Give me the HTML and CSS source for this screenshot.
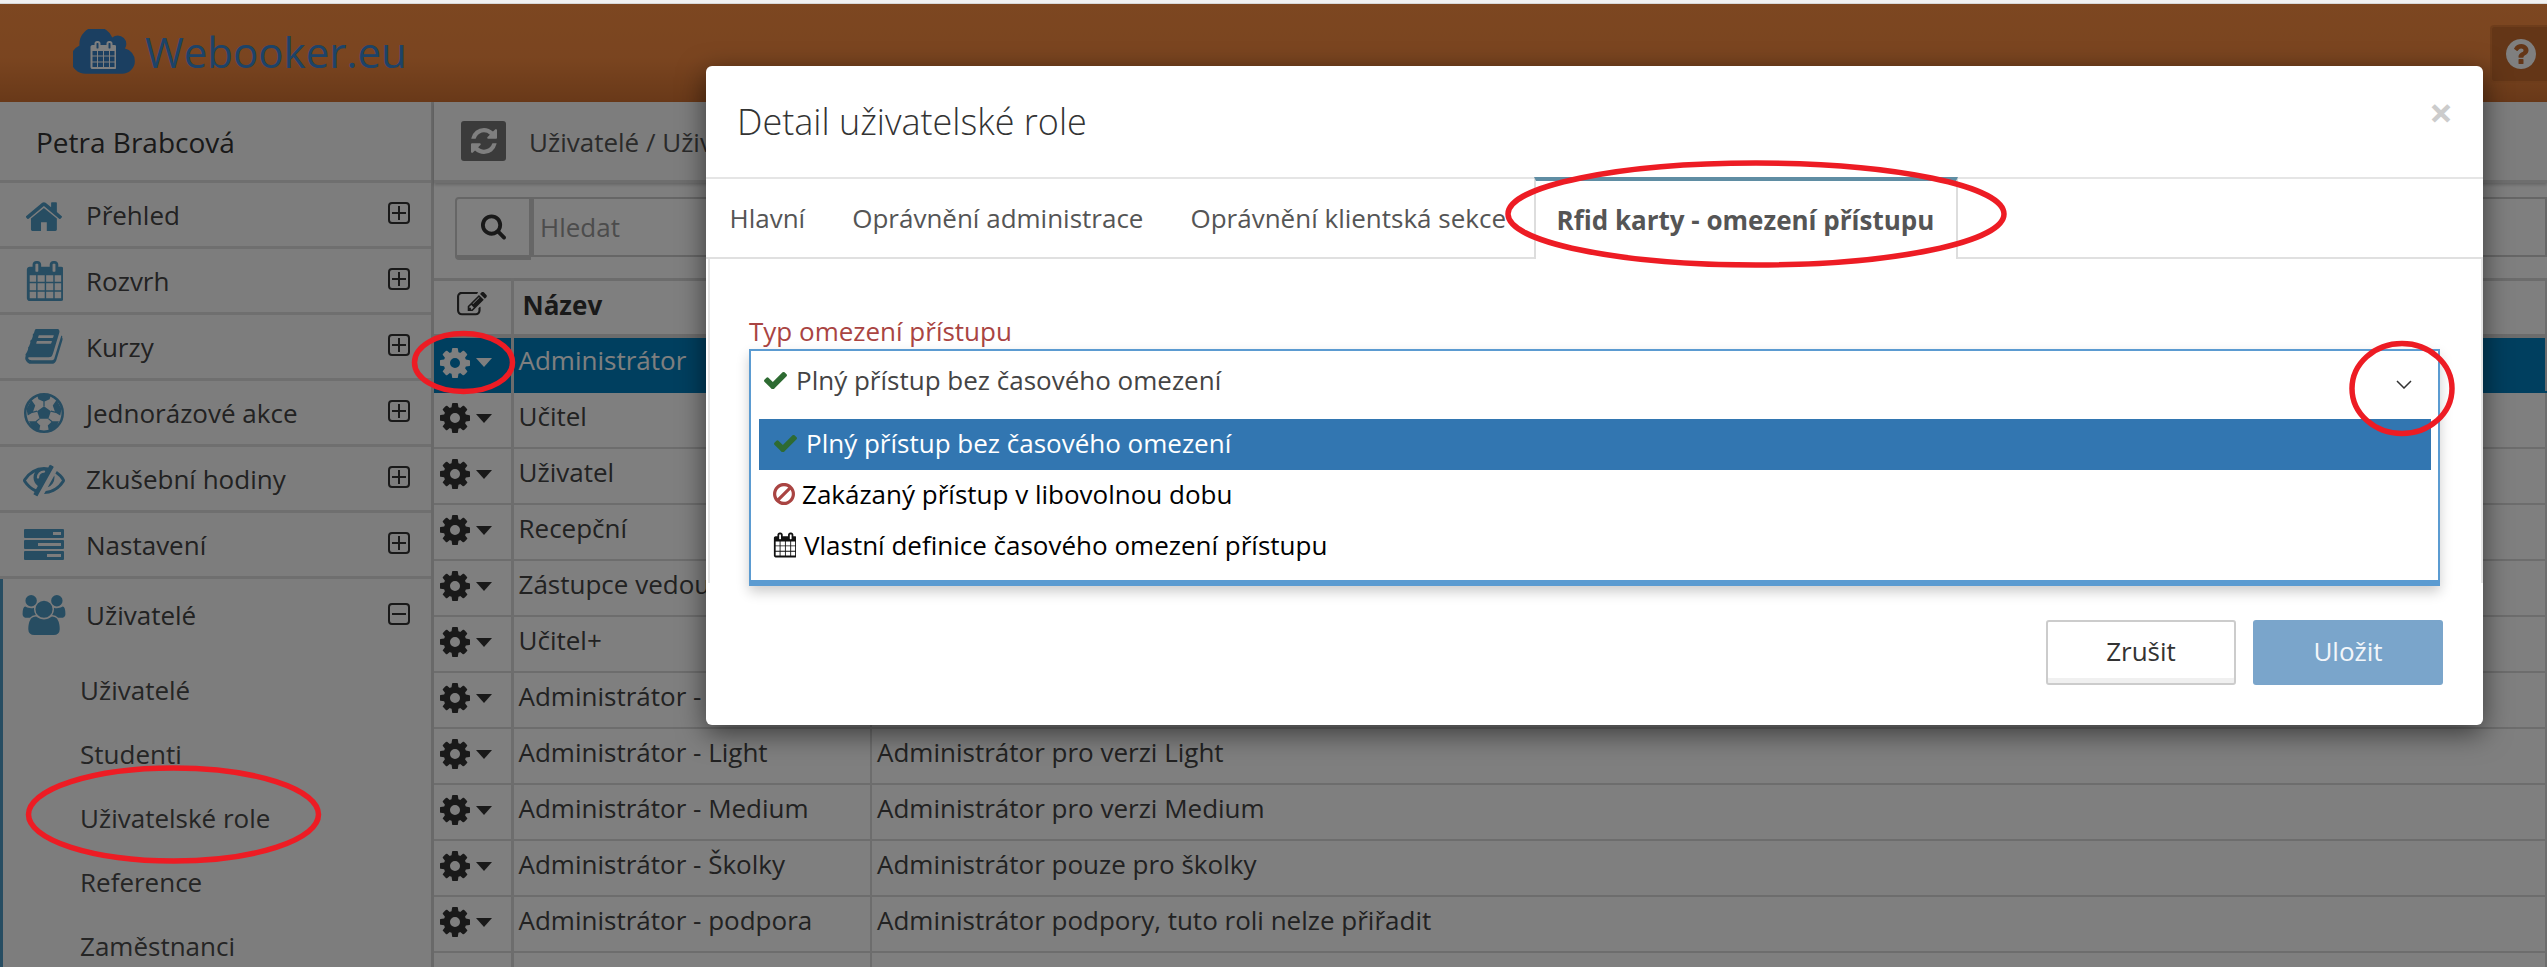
FILE: index.html
```html
<!DOCTYPE html>
<html lang="cs">
<head>
<meta charset="utf-8">
<title>Webooker.eu</title>
<link rel="stylesheet" href="styles.css">
</head>
<body>
<svg class="sprite" xmlns="http://www.w3.org/2000/svg">
  <symbol id="i-home" viewBox="100 150 1600 1350"><path d="M1472 992v480q0 26-19 45t-45 19h-384v-384h-256v384h-384q-26 0-45-19t-19-45v-480q0-1 .5-3t.5-3l575-474 575 474q1 2 1 6zm223-69l-62 74q-8 9-21 11h-3q-13 0-21-7l-692-577-692 577q-12 8-24 7-13-2-21-11l-62-74q-8-10-7-23.5t11-21.5l719-599q32-26 76-26t76 26l244 204v-195q0-14 9-23t23-9h192q14 0 23 9t9 23v408l219 182q10 8 11 21.5t-7 23.5z"/></symbol>
  <symbol id="i-cal" viewBox="0 0 1664 1792"><path d="M192 1664h288v-288h-288v288zm352 0h320v-288h-320v288zm-352-352h288v-320h-288v320zm352 0h320v-320h-320v320zm-352-384h288v-288h-288v288zm736 736h320v-288h-320v288zm-384-736h320v-288h-320v288zm768 736h288v-288h-288v288zm-384-352h320v-320h-320v320zm-352-864v-288q0-13-9.5-22.5t-22.5-9.5h-64q-13 0-22.5 9.5t-9.5 22.5v288q0 13 9.5 22.5t22.5 9.5h64q13 0 22.5-9.5t9.5-22.5zm736 864h288v-320h-288v320zm-384-384h320v-288h-320v288zm384 0h288v-288h-288v288zm32-480v-288q0-13-9.5-22.5t-22.5-9.5h-64q-13 0-22.5 9.5t-9.5 22.5v288q0 13 9.5 22.5t22.5 9.5h64q13 0 22.5-9.5t9.5-22.5zm384-64v1280q0 52-38 90t-90 38h-1408q-52 0-90-38t-38-90v-1280q0-52 38-90t90-38h128v-96q0-66 47-113t113-47h64q66 0 113 47t47 113v96h384v-96q0-66 47-113t113-47h64q66 0 113 47t47 113v96h128q52 0 90 38t38 90z"/></symbol>
  <symbol id="i-book" viewBox="60 110 1680 1560"><path d="M1703 478q40 57 18 129l-275 906q-19 64-76.500 107.500t-122.500 43.500h-923q-77 0-148.500-53.500t-99.500-131.500q-24-67-2-127 0-4 3-27t4-37q1-8-3-21.500t-3-19.500q2-11 8-21t16.500-23.500 16.500-23.500q23-38 45-91.500t30-91.500q3-10 .5-30t-.5-28q3-11 17-28t17-23q21-36 42-92t25-90q1-9-2.500-32t.5-28q4-13 22-30.500t22-22.500q19-26 42.500-84.500t27.500-96.500q1-8-3-25.500t-2-26.500q2-8 9-18t18-23 17-21q8-12 16.500-35.500t15-45 16.500-46.500 20-41.500 27.500-24.500 37.500-12 50 6l-1 3q47-11 63-11h761q74 0 114 56t18 130l-274 906q-36 119-71.500 153.500t-128.500 34.500h-869q-27 0-38 15-11 16-1 43 24 70 144 70h923q29 0 56-15.500t35-41.500l300-987q7-22 5-57 38 15 59 43zm-1064 2q-4 13 2 22.500t20 9.500h608q13 0 25.500-9.500t16.500-22.500l21-64q4-13-2-22.500t-20-9.500h-608q-13 0-25.500 9.500t-16.500 22.500zm-83 256q-4 13 2 22.500t20 9.500h608q13 0 25.500-9.500t16.500-22.500l21-64q4-13-2-22.500t-20-9.500h-608q-13 0-25.500 9.500t-16.500 22.500z"/></symbol>
  <symbol id="i-ball" viewBox="0 0 64 64"><circle cx="32" cy="32" r="30" fill="none" stroke="currentColor" stroke-width="4"/><path d="M32 21l11 8-4 12H25l-4-12zM21 3h22l-2 7-9 4-9-4zM4 25l8-14 6 9-4 11-8 5zM60 25l-8-14-6 9 4 11 8 5zM8 45h11l7 7-2 9-11-6zM56 45H45l-7 7 2 9 11-6z"/><path d="M32 21v-8M21 29l-8 2M43 29l8 2M25 41l-6 5M39 41l6 5" fill="none" stroke="currentColor" stroke-width="2"/></symbol>
  <symbol id="i-eye" viewBox="0 0 1792 1792"><path d="M555 1335l78-141q-87-63-136-159t-49-203q0-121 61-225-229 117-381 353 167 258 427 375zm389-759q0-20-14-34t-34-14q-125 0-214.500 89.500t-89.500 214.500q0 20 14 34t34 14 34-14 14-34q0-86 61-147t147-61q20 0 34-14t14-34zm363-191q0 7-1 9-106 189-316 567t-315 566l-49 89q-10 16-28 16-12 0-134-70-16-10-16-28 0-12 44-87-143-65-263.500-173t-208.500-245q-20-31-20-69t20-69q153-235 380-371t496-136q89 0 180 17l54-97q10-16 28-16 5 0 18 6t31 15.500 33 18.500 31.500 18.500 19.500 11.500q16 10 16 27zm37 447q0 139-79 253.500t-209 164.500l280-502q8 45 8 84zm448 128q0 35-20 69-39 64-109 145-150 172-347.500 267t-419.500 95l74-132q212-18 392.500-137t301.500-307q-115-179-282-294l63-112q95 64 182.500 153t144.500 184q20 34 20 69z"/></symbol>
  <symbol id="i-server" viewBox="0 0 40 31"><path fill-rule="evenodd" d="M1 0h38a1 1 0 0 1 1 1v7a1 1 0 0 1-1 1H1a1 1 0 0 1-1-1V1a1 1 0 0 1 1-1zM29 3v3h8V3zM1 11h38a1 1 0 0 1 1 1v7a1 1 0 0 1-1 1H1a1 1 0 0 1-1-1v-7a1 1 0 0 1 1-1zM14 14v3h23v-3zM1 22h38a1 1 0 0 1 1 1v7a1 1 0 0 1-1 1H1a1 1 0 0 1-1-1v-7a1 1 0 0 1 1-1zM23 25v3h14v-3z"/></symbol>
  <symbol id="i-users" viewBox="0 0 1920 1792"><path d="M593 896q-162 5-265 128h-134q-82 0-138-40.500t-56-118.500q0-353 124-353 6 0 43.500 21t97.500 42.500 119 21.500q67 0 133-23-5 37-5 66 0 139 81 256zm1071 637q0 120-73 189.500t-194 69.500h-874q-121 0-194-69.500t-73-189.500q0-53 3.500-103.500t14-109 26.500-108.500 43-97.500 62-81 85.500-53.500 111.500-20q10 0 43 21.500t73 48 107 48 135 21.500 135-21.500 107-48 73-48 43-21.500q61 0 111.500 20t85.500 53.500 62 81 43 97.500 26.500 108.500 14 109 3.500 103.500zm-1024-1277q0 106-75 181t-181 75-181-75-75-181 75-181 181-75 181 75 75 181zm704 384q0 159-112.500 271.500t-271.500 112.500-271.500-112.500-112.500-271.500 112.500-271.500 271.500-112.500 271.500 112.500 112.500 271.500zm576 225q0 78-56 118.500t-138 40.500h-134q-103-123-265-128 81-117 81-256 0-29-5-66 66 23 133 23 59 0 119-21.500t97.500-42.500 43.500-21q124 0 124 353zm-128-609q0 106-75 181t-181 75-181-75-75-181 75-181 181-75 181 75 75 181z"/></symbol>
  <symbol id="i-cog" viewBox="128 128 1536 1536"><path d="M1152 896q0-106-75-181t-181-75-181 75-75 181 75 181 181 75 181-75 75-181zm512-109v222q0 12-8 23t-20 13l-185 28q-19 54-39 91 35 50 107 138 10 12 10 25t-9 23q-27 37-99 108t-94 71q-12 0-26-9l-138-108q-44 23-91 38-16 136-29 186-7 28-36 28h-222q-14 0-24.500-8.500t-11.500-21.500l-28-184q-49-16-90-37l-141 107q-10 9-25 9-14 0-25-11-126-114-165-168-7-10-7-23 0-12 8-23 15-21 51-66.500t54-70.500q-27-50-41-99l-183-27q-13-2-21-12.500t-8-23.500v-222q0-12 8-23t19-13l186-28q14-46 39-92-40-57-107-138-10-12-10-24 0-10 9-23 26-36 98.500-107.500t94.500-71.500q13 0 26 10l138 107q44-23 91-38 16-136 29-186 7-28 36-28h222q14 0 24.500 8.500t11.500 21.500l28 184q49 16 90 37l142-107q9-9 24-9 13 0 25 10 129 119 165 170 7 8 7 22 0 12-8 23-15 21-51 66.500t-54 70.500q26 50 41 98l183 28q13 2 21 12.500t8 23.500z"/></symbol>
  <symbol id="i-refresh" viewBox="128 128 1536 1536"><path d="M1639 1056q0 5-1 7-64 268-268 434.500t-478 166.500q-146 0-282.500-55t-243.500-157l-129 129q-19 19-45 19t-45-19-19-45v-448q0-26 19-45t45-19h448q26 0 45 19t19 45-19 45l-137 137q71 66 161 102t187 36q134 0 250-65t186-179q11-17 53-117 8-23 30-23h192q13 0 22.500 9.500t9.500 22.500zm25-800v448q0 26-19 45t-45 19h-448q-26 0-45-19t-19-45 19-45l138-138q-148-137-349-137-134 0-250 65t-186 179q-11 17-53 117-8 23-30 23h-199q-13 0-22.500-9.500t-9.500-22.500v-7q65-268 270-434.500t480-166.500q146 0 284 55.500t245 156.500l130-129q19-19 45-19t45 19 19 45z"/></symbol>
  <symbol id="i-search" viewBox="0 128 1728 1664"><path d="M1216 832q0-185-131.500-316.500t-316.500-131.500-316.500 131.500-131.500 316.500 131.500 316.500 316.500 131.500 316.500-131.500 131.500-316.500zm512 832q0 52-38 90t-90 38q-54 0-90-38l-343-342q-179 124-399 124-143 0-273.500-55.500t-225-150-150-225-55.500-273.500 55.500-273.500 150-225 225-150 273.500-55.500 273.500 55.500 225 150 150 225 55.500 273.500q0 220-124 399l343 343q37 37 37 90z"/></symbol>
  <symbol id="i-edit" viewBox="0 200 1792 1500"><path d="M888 1184l116-116-152-152-116 116v56h96v96h56zm440-720q-16-16-33 1l-350 350q-17 17-1 33t33-1l350-350q17-17 1-33zm80 594v190q0 119-84.500 203.500t-203.500 84.500h-832q-119 0-203.500-84.500t-84.500-203.500v-832q0-119 84.500-203.500t203.500-84.500h832q63 0 117 25 15 7 18 23 3 17-9 29l-49 49q-14 14-32 8-23-6-45-6h-832q-66 0-113 47t-47 113v832q0 66 47 113t113 47h832q66 0 113-47t47-113v-126q0-13 9-22l64-64q15-15 35-7t20 29zm-96-738l288 288-672 672h-288v-288zm444 132l-92 92-288-288 92-92q28-28 68-28t68 28l152 152q28 28 28 68t-28 68z"/></symbol>
  <symbol id="i-check" viewBox="120 320 1552 1120"><path d="M1671 566q0 40-28 68l-724 724-136 136q-28 28-68 28t-68-28l-136-136-362-362q-28-28-28-68t28-68l136-136q28-28 68-28t68 28l294 295 656-657q28-28 68-28t68 28l136 136q28 28 28 68z"/></symbol>
  <symbol id="i-ban" viewBox="128 128 1536 1536"><path d="M1440 893q0-161-87-295l-754 753q137 89 297 89 111 0 211.500-43.500t173.500-116.500 116-174.500 43-212.500zm-999 299l755-754q-135-91-300-91-148 0-273 73t-198 199-73 274q0 162 89 299zm1223-299q0 157-61 300t-163.500 246-245 164-298.500 61-298.500-61-245-164-163.500-246-61-300 61-299.500 163.500-245.500 245-164 298.500-61 298.500 61 245 164 163.500 245.500 61 299.500z"/></symbol>
  <symbol id="i-help" viewBox="128 128 1536 1536"><path d="M1024 1376v-192q0-14-9-23t-23-9h-192q-14 0-23 9t-9 23v192q0 14 9 23t23 9h192q14 0 23-9t9-23zm256-672q0-88-55.500-163t-138.500-116-170-41q-243 0-371 213-15 24 8 42l132 100q7 6 19 6 16 0 25-12 53-68 86-92 34-24 86-24 48 0 85.500 26t37.500 59q0 38-20 61t-68 45q-63 28-115.500 86.500t-52.500 125.500v36q0 14 9 23t23 9h192q14 0 23-9t9-23q0-19 21.500-49.500t54.500-49.500q32-18 49-28.500t46-35 44.500-48 28-60.500 12.500-81zm384 192q0 209-103 385.500t-279.500 279.500-385.500 103-385.500-103-279.500-279.500-103-385.500 103-385.500 279.500-279.500 385.500-103 385.500 103 279.500 279.500 103 385.500z"/></symbol>
  <symbol id="i-cloud" viewBox="0 256 1920 1280"><path d="M1856 1152q0 159-112.500 271.500t-271.500 112.500h-1088q-185 0-316.500-131.500t-131.500-316.500q0-132 71-241.500t187-163.500q-2-28-2-43 0-212 150-362t362-150q158 0 286.500 88t187.500 230q70-62 166-62 106 0 181 75t75 181q0 75-41 138 129 30 213 134.500t84 239.500z"/></symbol>
</svg>

<div class="browser-edge"></div>

<header class="topbar">
  <div class="logo">
    <span class="logo-mark">
      <svg class="logo-cloud"><use href="#i-cloud"/></svg>
      <svg class="logo-cal"><use href="#i-cal"/></svg>
    </span>
    <span class="logo-text">Webooker.eu</span>
  </div>
  <button class="help-btn" type="button" aria-label="Nápověda"><svg class="help-ico"><use href="#i-help"/></svg></button>
</header>

<div class="layout">
  <aside class="sidebar">
    <div class="user">Petra Brabcová</div>
    <nav>
      <a class="nav-item"><span class="nav-ico"><svg class="ico-home"><use href="#i-home"/></svg></span>Přehled<span class="toggle plus"></span></a>
      <a class="nav-item"><span class="nav-ico"><svg class="ico-cal"><use href="#i-cal"/></svg></span>Rozvrh<span class="toggle plus"></span></a>
      <a class="nav-item"><span class="nav-ico"><svg class="ico-book"><use href="#i-book"/></svg></span>Kurzy<span class="toggle plus"></span></a>
      <a class="nav-item"><span class="nav-ico"><svg class="ico-ball"><use href="#i-ball"/></svg></span>Jednorázové akce<span class="toggle plus"></span></a>
      <a class="nav-item"><span class="nav-ico"><svg class="ico-eye"><use href="#i-eye"/></svg></span>Zkušební hodiny<span class="toggle plus"></span></a>
      <a class="nav-item"><span class="nav-ico"><svg class="ico-server"><use href="#i-server"/></svg></span>Nastavení<span class="toggle plus"></span></a>
      <div class="nav-open">
        <a class="nav-item nav-item-open"><span class="nav-ico"><svg class="ico-users"><use href="#i-users"/></svg></span>Uživatelé<span class="toggle"></span></a>
        <a class="sub-item">Uživatelé</a>
        <a class="sub-item">Studenti</a>
        <a class="sub-item">Uživatelské role</a>
        <a class="sub-item">Reference</a>
        <a class="sub-item">Zaměstnanci</a>
      </div>
    </nav>
  </aside>

  <main class="content">
    <div class="crumbs">
      <button class="refresh" type="button" aria-label="Obnovit"><svg class="refresh-ico"><use href="#i-refresh"/></svg></button>
      <span class="crumb-text">Uživatelé / Uživ</span>
    </div>
    <div class="searchbar">
      <button class="search-btn" type="button" aria-label="Hledat"><svg class="search-ico"><use href="#i-search"/></svg></button>
      <div class="search-input">Hledat</div>
    </div>
    <table class="grid">
      <colgroup><col class="col-a"><col class="col-b"><col></colgroup>
      <thead>
        <tr><th class="cell-act"><svg class="edit-ico"><use href="#i-edit"/></svg></th><th>Název</th><th></th></tr>
      </thead>
      <tbody>
        <tr class="selected"><td class="cell-act"><span class="act"><svg class="cog"><use href="#i-cog"/></svg><i class="caret"></i></span></td><td>Administrátor</td><td></td></tr>
        <tr><td class="cell-act"><span class="act"><svg class="cog"><use href="#i-cog"/></svg><i class="caret"></i></span></td><td>Učitel</td><td></td></tr>
        <tr><td class="cell-act"><span class="act"><svg class="cog"><use href="#i-cog"/></svg><i class="caret"></i></span></td><td>Uživatel</td><td></td></tr>
        <tr><td class="cell-act"><span class="act"><svg class="cog"><use href="#i-cog"/></svg><i class="caret"></i></span></td><td>Recepční</td><td></td></tr>
        <tr><td class="cell-act"><span class="act"><svg class="cog"><use href="#i-cog"/></svg><i class="caret"></i></span></td><td>Zástupce vedoucího</td><td></td></tr>
        <tr><td class="cell-act"><span class="act"><svg class="cog"><use href="#i-cog"/></svg><i class="caret"></i></span></td><td>Učitel+</td><td></td></tr>
        <tr><td class="cell-act"><span class="act"><svg class="cog"><use href="#i-cog"/></svg><i class="caret"></i></span></td><td>Administrátor -</td><td></td></tr>
        <tr><td class="cell-act"><span class="act"><svg class="cog"><use href="#i-cog"/></svg><i class="caret"></i></span></td><td>Administrátor - Light</td><td>Administrátor pro verzi Light</td></tr>
        <tr><td class="cell-act"><span class="act"><svg class="cog"><use href="#i-cog"/></svg><i class="caret"></i></span></td><td>Administrátor - Medium</td><td>Administrátor pro verzi Medium</td></tr>
        <tr><td class="cell-act"><span class="act"><svg class="cog"><use href="#i-cog"/></svg><i class="caret"></i></span></td><td>Administrátor - Školky</td><td>Administrátor pouze pro školky</td></tr>
        <tr><td class="cell-act"><span class="act"><svg class="cog"><use href="#i-cog"/></svg><i class="caret"></i></span></td><td>Administrátor - podpora</td><td>Administrátor podpory, tuto roli nelze přiřadit</td></tr>
        <tr><td class="cell-act"></td><td></td><td></td></tr>
      </tbody>
    </table>
  </main>
</div>

<div class="backdrop"></div>

<section class="modal">
  <div class="modal-head">
    <h2 class="modal-title">Detail uživatelské role</h2>
    <span class="modal-close">×</span>
  </div>
  <div class="tabs">
    <a class="tab">Hlavní</a>
    <a class="tab">Oprávnění administrace</a>
    <a class="tab">Oprávnění klientská sekce</a>
    <a class="tab tab-active">Rfid karty - omezení přístupu</a>
  </div>
  <div class="modal-body">
    <label class="field-label">Typ omezení přístupu</label>
    <div class="select">
      <div class="select-head">
        <svg class="opt-check"><use href="#i-check"/></svg>
        <span>Plný přístup bez časového omezení</span>
        <svg class="chevron" viewBox="0 0 16 9"><path d="M1 1l7 7 7-7"/></svg>
      </div>
      <ul class="options">
        <li class="option option-on"><svg class="opt-check"><use href="#i-check"/></svg>Plný přístup bez časového omezení</li>
        <li class="option option-ban"><svg class="opt-ban"><use href="#i-ban"/></svg>Zakázaný přístup v libovolnou dobu</li>
        <li class="option option-cal"><svg class="opt-cal"><use href="#i-cal"/></svg>Vlastní definice časového omezení přístupu</li>
      </ul>
    </div>
  </div>
  <div class="modal-foot">
    <button class="btn btn-cancel" type="button">Zrušit</button>
    <button class="btn btn-save" type="button">Uložit</button>
  </div>
</section>

<svg class="marks" viewBox="0 0 2547 967" xmlns="http://www.w3.org/2000/svg">
  <ellipse cx="173.500" cy="814.500" rx="145" ry="46.500"/>
  <ellipse cx="463.500" cy="362.500" rx="49" ry="29"/>
  <ellipse cx="1756" cy="214" rx="248" ry="51"/>
  <ellipse cx="2402" cy="388.500" rx="50" ry="45"/>
</svg>
</body>
</html>
```
FILE: styles.css
```css
* { box-sizing: border-box; }
html, body { margin: 0; height: 967px; overflow: hidden; }
body {
  position: relative;
  width: 2547px;
  background: #fff;
  color: #444;
  font-family: "Open Sans", "Liberation Sans", sans-serif;
  font-size: 26px;
}
a { color: inherit; text-decoration: none; }
button { font-family: inherit; }
.sprite { position: absolute; width: 0; height: 0; }
svg { display: block; fill: currentColor; }

.browser-edge { height: 4px; background: #f1f1f1; border-bottom: 1px solid #d8d8d8; position: relative; z-index: 5; }

.topbar {
  height: 98px;
  display: flex;
  align-items: flex-start;
  justify-content: space-between;
  background: linear-gradient(#fa8e42, #f58a40 55%, #d27232);
}
.logo { display: flex; align-items: center; padding: 22px 0 0 73px; color: #3e98e8; }
.logo-mark { position: relative; width: 64px; height: 47px; color: #367ec2; }
.logo-cloud { width: 64px; height: 47px; }
.logo-cal { position: absolute; left: 16px; top: 12px; width: 27px; height: 28px; color: #fff; }
.logo-text { margin-left: 8px; font-size: 42px; line-height: 52px; color: #3a86d0; font-weight: 400; }
.help-btn {
  margin-top: 21px;
  width: 57px;
  height: 58px;
  padding: 0 0 0 14px;
  background: #c96d2e;
  border: 2px solid #dd7a36;
  border-right: 0;
  border-radius: 4px 0 0 4px;
  color: #fff;
}
.help-ico { width: 30px; height: 30px; }

.layout { display: grid; grid-template-columns: 434px 1fr; height: 865px; }

.sidebar { background: #fbfbfb; border-right: 3px solid #d2d2d2; }
.user { height: 81px; padding: 2px 0 0 36px; display: flex; align-items: center; font-size: 28px; color: #333; border-bottom: 3px solid #dedede; }
.nav-item {
  height: 66px;
  display: flex;
  align-items: center;
  padding-left: 12px;
  gap: 10px;
  border-bottom: 3px solid #dedede;
  color: #444;
}
.nav-ico { width: 64px; display: flex; justify-content: center; color: #4f9ac4; }
.ico-home { width: 36px; height: 32px; }
.ico-cal { width: 38px; height: 40px; }
.ico-book { width: 38px; height: 35px; }
.ico-ball { width: 40px; height: 40px; }
.ico-eye { width: 42px; height: 42px; }
.ico-server { width: 40px; height: 31px; }
.ico-users { width: 44px; height: 40px; }
.toggle {
  position: relative;
  margin-left: auto;
  margin-right: 21px;
  width: 22px;
  height: 22px;
  border: 2px solid #333;
  border-radius: 4px;
  margin-top: -3px;
}
.toggle::before { content: ""; position: absolute; left: 2px; right: 2px; top: 8px; height: 2px; background: #333; }
.plus::after { content: ""; position: absolute; top: 2px; bottom: 2px; left: 8px; width: 2px; background: #333; }
.nav-open { border-left: 3px solid #4f9ac4; }
.nav-item-open { height: 72px; padding-left: 9px; border-bottom: 0; align-items: center; margin-bottom: 8px; }
.sub-item { display: flex; align-items: center; height: 64px; padding-left: 77px; padding-bottom: 2px; color: #4a4a4a; }

.content { min-width: 0; }
.crumbs {
  height: 81px;
  display: flex;
  align-items: center;
  gap: 23px;
  padding-left: 27px;
  border-bottom: 3px solid #dcdcdc;
  box-shadow: 0 2px 3px rgba(0,0,0,.2);
  color: #555;
  background: #fbfbfb;
}
.crumb-text { white-space: nowrap; padding-top: 2px; }
.refresh { width: 45px; height: 40px; padding: 0; display: flex; align-items: center; justify-content: center; background: #777; border: 0; border-radius: 3px; color: #fff; }
.refresh-ico { width: 26px; height: 26px; }
.searchbar { height: 95px; padding: 14px 0 0 21px; display: flex; align-items: flex-start; }
.search-btn { width: 76px; height: 63px; display: flex; align-items: center; justify-content: center; padding: 0; background: #fff; border: 2px solid #ccc; border-bottom-width: 5px; border-radius: 4px 0 0 4px; color: #333; }
.search-ico { width: 26px; height: 26px; }
.search-input { flex: 1; height: 60px; padding-left: 6px; display: flex; align-items: center; border: 2px solid #ccc; border-left-width: 3px; color: #999; }

.grid { width: 100%; border-collapse: collapse; table-layout: fixed; }
.col-a { width: 78px; }
.col-b { width: 359px; }
.grid th, .grid td { height: 56px; padding: 0 0 8px 5px; border: 2px solid #dadada; border-left: 0; text-align: left; font-weight: 400; white-space: nowrap; overflow: hidden; line-height: 1; }
.grid th { font-weight: 700; color: #333; padding: 0 0 4px 9px; border-top: 3px solid #d8d8d8; border-bottom: 4px solid #d8d8d8; }
.grid .cell-act { padding: 0 0 3px; border-right-width: 3px; }
.edit-ico { width: 30px; height: 27px; margin-left: 23px; color: #333; }
.act { display: flex; align-items: center; gap: 6px; padding-left: 6px; color: #333; }
.cog { width: 30px; height: 30px; }
.caret { width: 0; height: 0; border: 8px solid transparent; border-top: 9px solid currentColor; border-bottom: 0; }
.selected td { background: #007ebe; color: #fff; border-color: #007ebe; border-right-color: #d8d8d8; }
.selected .act { color: #fff; }

.backdrop { position: absolute; inset: 0; top: 4px; background: rgba(0,0,0,.5); }

.modal {
  position: absolute;
  left: 706px;
  top: 66px;
  width: 1777px;
  height: 659px;
  display: flex;
  flex-direction: column;
  background: #fff;
  border-radius: 6px;
  box-shadow: 0 8px 28px rgba(0,0,0,.55);
}
.modal-head { height: 113px; flex: none; display: flex; align-items: flex-start; justify-content: space-between; border-bottom: 2px solid #e5e5e5; padding: 0 30px 0 31px; }
.modal-title { margin: 32px 0 0; font-size: 36px; line-height: 48px; font-weight: 300; color: #333; }
.modal-close { margin-top: 26px; font-size: 42px; line-height: 40px; font-weight: 700; color: #ccc; }

.tabs { height: 80px; flex: none; display: flex; align-items: stretch; border-bottom: 2px solid #e0e0e0; }
.tab { display: flex; align-items: center; padding: 0 23.500px; color: #555; }
.tab-active {
  margin: -2px 0 -2px 4px;
  padding: 0 22px 0 21px;
  background: #fff;
  font-weight: 700;
  border: 2px solid #ddd;
  border-top: 4px solid #5f8da3;
  border-bottom: 0;
}

.modal-body { flex: none; height: 324px; margin: 0 0 0 2px; padding: 56px 41px 0 39px; border-left: 2px solid #e5e5e5; border-right: 2px solid #e5e5e5; }
.field-label { display: block; height: 34px; line-height: 32px; color: #a94442; }
.select { position: relative; z-index: 1; height: 237px; background: #fff; border: 2px solid #5b9bd1; border-bottom-width: 6px; box-shadow: 0 6px 12px rgba(0,0,0,.2); }
.select-head { height: 60px; display: flex; align-items: center; padding: 0 0 3px 13px; gap: 9px; color: #444; position: relative; }
.opt-check { flex: none; width: 23px; height: 18px; color: #2e6b32; }
.chevron { position: absolute; right: 26px; top: 29px; width: 16px; height: 9px; fill: none; stroke: #333; stroke-width: 1.500; }
.options { list-style: none; margin: 8px 7px 0 8px; padding: 0; }
.option { height: 51px; display: flex; align-items: center; padding: 0 0 3px 15px; color: #000; }
.option-on { background: #3276b1; color: #fff; gap: 9px; }
.option-ban { padding-left: 14px; gap: 7px; }
.option-cal { padding-left: 14px; gap: 8px; }
.opt-ban { width: 22px; height: 22px; color: #a94442; }
.opt-cal { width: 23px; height: 26px; color: #111; }

.modal-foot { flex: 1; display: flex; justify-content: flex-end; align-items: flex-start; gap: 17px; padding: 37px 40px 0 0; }
.btn { height: 65px; width: 190px; font-size: 26px; border-radius: 3px; padding-bottom: 4px; }
.btn-cancel { background: #fff; color: #333; border: 2px solid #ccc; box-shadow: inset 0 -5px #f0f0f0; }
.btn-save { background: #7aa5cb; color: #f2f6fa; border: 0; }

.marks { position: absolute; z-index: 2; left: 0; top: 0; width: 2547px; height: 967px; fill: none; stroke: #ed1c24; stroke-width: 5.500; pointer-events: none; }
```
